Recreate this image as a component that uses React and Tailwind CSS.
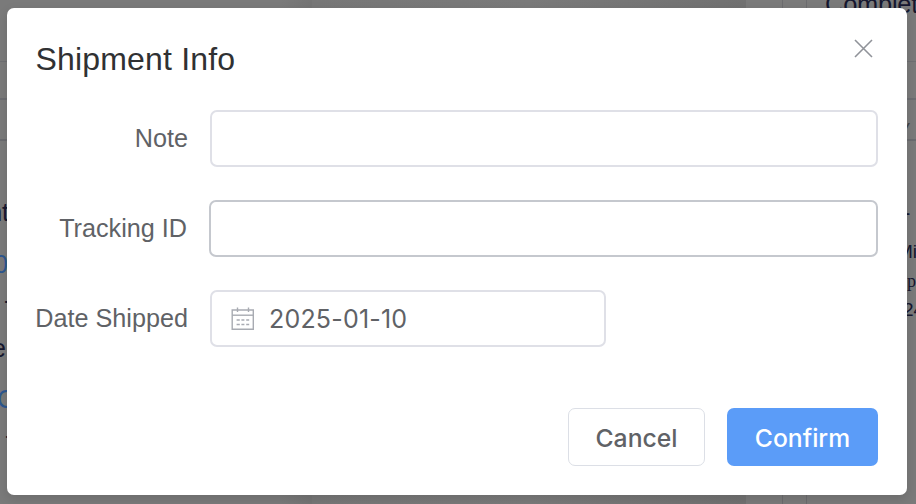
const rules = (
  <>
    <div className="h-[61px] border-b border-[#6e6f72] box-content" />
    <div className="mt-[36px] h-[2px] bg-[#6c6d71]" />
    <div className="mt-[39px] h-[2px] bg-[#6a6b6f]" />
  </>
);

function LeftEdge() {
  return (
    <div className="flex w-[7px] shrink-0 flex-col overflow-hidden text-[25px] leading-7">
      {rules}
      <div className="mt-[57px] flex w-[9px] shrink-0 flex-col">
        <span className="self-end">nt</span>
        <span className="-ml-[6px] mt-[24px] text-[#2d5790]">0</span>
        <span className="ml-[4px] mt-[8px]">-</span>
        <span className="-ml-[8px] mt-[20px]">e</span>
        <span className="-ml-[3px] mt-[23px] text-[#2d5790]">C</span>
        <span className="ml-[5px] mt-[8px]">-</span>
      </div>
    </div>
  );
}

function RightEdge() {
  return (
    <div className="flex w-[9px] shrink-0 flex-col overflow-hidden leading-7">
      {rules}
      <span className="-mt-[28px] h-7 -ml-[7px] text-[18px] italic text-[#424347]">v</span>
      <div className="mt-[58px] flex flex-col">
        <span className="-ml-[4px] text-[22px]">-</span>
        <span className="-ml-[10px] mt-[11px] whitespace-nowrap text-[19px]">Mi</span>
        <span className='mt-px font-["Liberation_Serif",serif] text-[18px]'>p</span>
        <span className="-ml-[4px] mt-px text-[19px]">24</span>
      </div>
    </div>
  );
}

function Backdrop() {
  return (
    <div aria-hidden="true" className='absolute inset-0 flex overflow-hidden bg-[#7a7a7a] font-["Liberation_Sans",Arial,sans-serif] text-[#15172f]'>
      <LeftEdge />
      <div className="flex min-w-0 flex-1">
        <div className="w-[305px] shrink-0 bg-linear-to-r from-[#7a7a7a] from-90% to-[#747474]" />
        <div className="w-[434px] shrink-0 bg-linear-to-r from-[#777777] via-[#7a7a7a] to-[#717171]" />
        <div className="w-[37px] shrink-0 border-r border-[#6b6b6e]" />
        <div className="w-[24px] shrink-0 border-r border-[#6b6b6e]" />
      </div>
      <RightEdge />
      <span className="-ml-[91px] -mt-[11px] w-[91px] shrink-0 text-[25.4px] leading-[30px] tracking-[-0.2px]">Complete</span>
    </div>
  );
}

function CalendarIcon() {
  return (
    <svg className="shrink-0" width="24" height="24" viewBox="0 0 24 24" fill="none" stroke="#a8abb2">
      <path d="M1.2 3H22.3V22.3H1.2Z" strokeWidth="1.4" />
      <path d="M1.2 8.2H22.3" strokeWidth="1.4" />
      <path d="M6.5 0.5V5M17.5 0.5V5" strokeWidth="1.4" />
      <path d="M5.6 13H8.8M10.4 13H13.4M15.2 13H18.2M5.6 17.6H8.8M10.4 17.6H13.4M15.2 17.6H18.2" strokeWidth="1.5" />
    </svg>
  );
}

function Field({ label, children }) {
  return (
    <div className="flex h-[57px] items-center">
      <label className='w-[181px] shrink-0 whitespace-nowrap pb-0.5 text-right font-["Liberation_Sans",Arial,sans-serif] text-[25.2px] leading-[30px] text-[#606266]'>{label}</label>
      {children}
    </div>
  );
}

export default function App() {
  return (
    <div className="relative h-[504px] w-[916px] overflow-hidden">
      <Backdrop />
      <div className="relative flex h-full pb-[9px] pl-[7px] pr-[9px] pt-2">
        <section role="dialog" className="flex w-full flex-col rounded-[7px] bg-white pr-[29px] shadow-[0_4px_12px_rgba(0,0,0,0.12)]">
          <header className='flex h-[102px] items-start justify-between pl-[28.5px] pt-[32px] font-["Liberation_Sans",Arial,sans-serif]'>
            <h2 className="text-[32px] leading-[38px] tracking-[0.18px] text-[#303133]">Shipment Info</h2>
            <button aria-label="Close" className="mr-[5px] mt-[-1px]">
              <svg width="19" height="19" viewBox="0 0 19 19" fill="none" stroke="#909399" strokeWidth="1.6">
                <path d="M1 1L18 18M18 1L1 18" />
              </svg>
            </button>
          </header>
          <div className="flex flex-col gap-[33px]">
            <Field label="Note">
              <div className="ml-[22px] h-[57px] flex-1 rounded-[7px] border-2 border-[#dfe0e7]" />
            </Field>
            <Field label={<span className="pr-px">Tracking ID</span>}>
              <div className="ml-[21px] h-[57px] flex-1 rounded-[7px] border-2 border-[#c5c8ce]" />
            </Field>
            <Field label="Date Shipped">
              <div className="ml-[22px] flex h-[57px] w-[396px] items-center gap-[14px] rounded-[7px] border-2 border-[#dfe0e7] pl-[19px]">
                <CalendarIcon />
                <span className="font-[Inter,sans-serif] text-[25px] leading-[30px] tracking-[0.2px] text-[#606266]">2025-01-10</span>
              </div>
            </Field>
          </div>
          <footer className="mt-[61px] flex justify-end gap-[22px] font-[Inter,sans-serif] text-[24.7px] font-medium leading-[30px]">
            <button className="h-[58px] w-[137px] rounded-[7px] border border-[#dcdfe6] pt-0.5 text-[#606266]">Cancel</button>
            <button className="h-[58px] w-[151px] rounded-[7px] bg-[#5b9cf8] pt-0.5 text-white">Confirm</button>
          </footer>
        </section>
      </div>
    </div>
  );
}
